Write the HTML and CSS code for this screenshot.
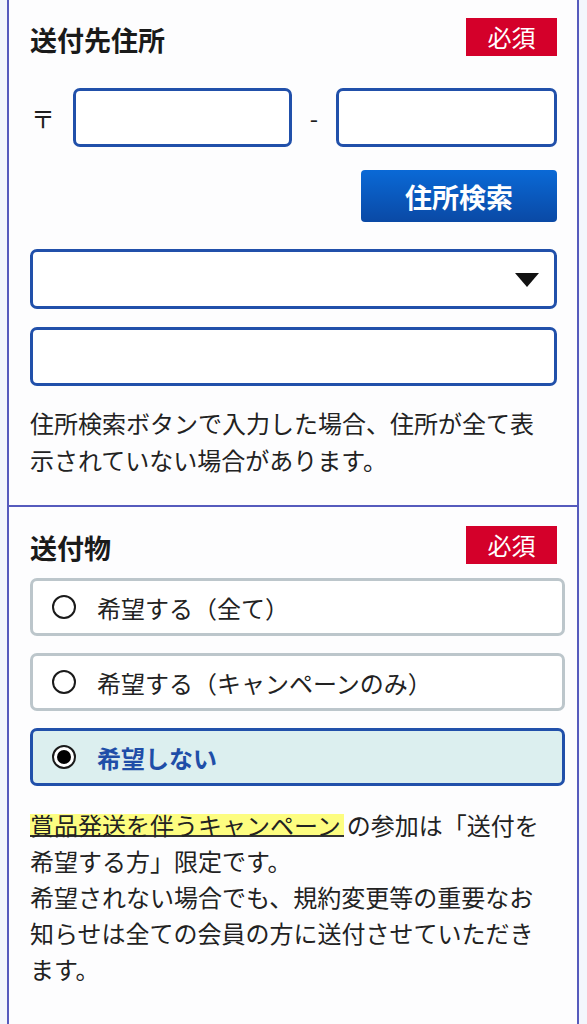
FILE: index.html
```html
<!DOCTYPE html>
<html lang="ja">
<head>
<meta charset="utf-8">
<title>送付先住所</title>
<link rel="stylesheet" href="styles.css">
</head>
<body>
<div class="panel">
  <section class="section first">
    <div class="head">
      <h2 class="title">送付先住所</h2>
      <span class="badge">必須</span>
    </div>
    <div class="postal">
      <span class="mark">〒</span>
      <div class="field zip1"></div>
      <span class="dash">-</span>
      <div class="field zip2"></div>
    </div>
    <div class="btn-row">
      <button class="search-btn" type="button">住所検索</button>
    </div>
    <div class="field select">
      <svg class="caret" width="24" height="14" viewBox="0 0 24 14"><polygon points="0,0 24,0 12,14" fill="#111"/></svg>
    </div>
    <div class="field address"></div>
    <p class="note">住所検索ボタンで入力した場合、住所が全て表示されていない場合があります。</p>
  </section>
  <section class="section second">
    <div class="head">
      <h2 class="title">送付物</h2>
      <span class="badge">必須</span>
    </div>
    <div class="options">
      <div class="option"><span class="radio"></span><span class="label">希望する（全て）</span></div>
      <div class="option"><span class="radio"></span><span class="label">希望する（キャンペーンのみ）</span></div>
      <div class="option selected"><span class="radio"></span><span class="label">希望しない</span></div>
    </div>
    <p class="note note2"><span class="mark-hl">賞品発送を伴うキャンペーン</span><span class="gap"></span>の参加は「送付を希望する方」限定です。<br>希望されない場合でも、規約変更等の重要なお知らせは全ての会員の方に送付させていただきます。</p>
  </section>
</div>
</body>
</html>
```

FILE: styles.css
```css
* { box-sizing: border-box; }
html, body {
  margin: 0;
  padding: 0;
  background: #f3f6fc;
  font-family: "Noto Sans CJK JP", "Noto Sans", sans-serif;
  color: #1e1e1e;
}
.panel {
  margin-left: 7px;
  width: 572px;
  min-height: 1024px;
  background: #fdfdfe;
  border-left: 2px solid #565bbd;
  border-right: 2px solid #565bbd;
}
.section {
  padding: 0 20px 0 21px;
}
.first {
  padding-top: 18px;
  padding-bottom: 27px;
}
.second {
  border-top: 2px solid #565bbd;
  padding-top: 19px;
}
.head {
  display: flex;
  justify-content: space-between;
  align-items: center;
  height: 38px;
}
.title {
  margin: 0;
  font-size: 27px;
  font-weight: 700;
  line-height: 1;
  padding-top: 4px;
  color: #1a1a1a;
}
.badge {
  width: 91px;
  height: 38px;
  background: #d4002a;
  color: #fff;
  font-size: 24px;
  line-height: 38px;
  text-align: center;
}
.postal {
  display: flex;
  align-items: center;
  margin-top: 32px;
}
.mark {
  width: 43px;
  font-size: 24px;
  line-height: 59px;
  padding-left: 1px;
}
.dash {
  width: 44px;
  text-align: center;
  font-size: 24px;
  line-height: 59px;
}
.field {
  height: 59px;
  border: 3px solid #2150aa;
  border-radius: 7px;
  background: #fff;
}
.zip1 { width: 219px; }
.zip2 { width: 221px; }
.btn-row {
  display: flex;
  justify-content: flex-end;
  margin-top: 23px;
}
.search-btn {
  width: 196px;
  height: 52px;
  border: none;
  border-radius: 4px;
  background: linear-gradient(#0a69d6, #0a49a5);
  color: #fff;
  font-family: inherit;
  font-size: 27px;
  font-weight: 700;
  padding: 0;
}
.select {
  margin-top: 27px;
  height: 60px;
  display: flex;
  align-items: center;
  justify-content: flex-end;
  padding-right: 15px;
}
.caret { display: block; margin-top: 1px; }
.address { margin-top: 18px; }
.note {
  margin: 18px 0 0;
  font-size: 24px;
  line-height: 37px;
  color: #222;
}
.options {
  display: flex;
  flex-direction: column;
  gap: 17px;
  margin-top: 14px;
  margin-right: -8px;
}
.option {
  display: flex;
  align-items: center;
  height: 58px;
  border: 3px solid #bcc6cb;
  border-radius: 7px;
  background: #fff;
  padding-left: 19px;
}
.radio {
  width: 24px;
  height: 24px;
  border: 2px solid #1a1a1a;
  border-radius: 50%;
  background: #fff;
  position: relative;
  flex: none;
}
.label {
  margin-left: 21px;
  font-size: 24px;
  color: #222;
}
.option.selected {
  background: #dcefef;
  border-color: #2150aa;
}
.option.selected .radio::after {
  content: "";
  position: absolute;
  left: 3px;
  top: 3px;
  width: 14px;
  height: 14px;
  border-radius: 50%;
  background: #000;
}
.option.selected .label {
  font-weight: 700;
  color: #1f4ea8;
}
.note2 {
  margin-top: 21px;
  line-height: 36px;
}
.mark-hl {
  display: inline-block;
  line-height: 21px;
  padding-right: 3px;
  background: #fdfd80;
  border-bottom: 2px solid #333;
}
.gap {
  display: inline-block;
  width: 3px;
}
```
